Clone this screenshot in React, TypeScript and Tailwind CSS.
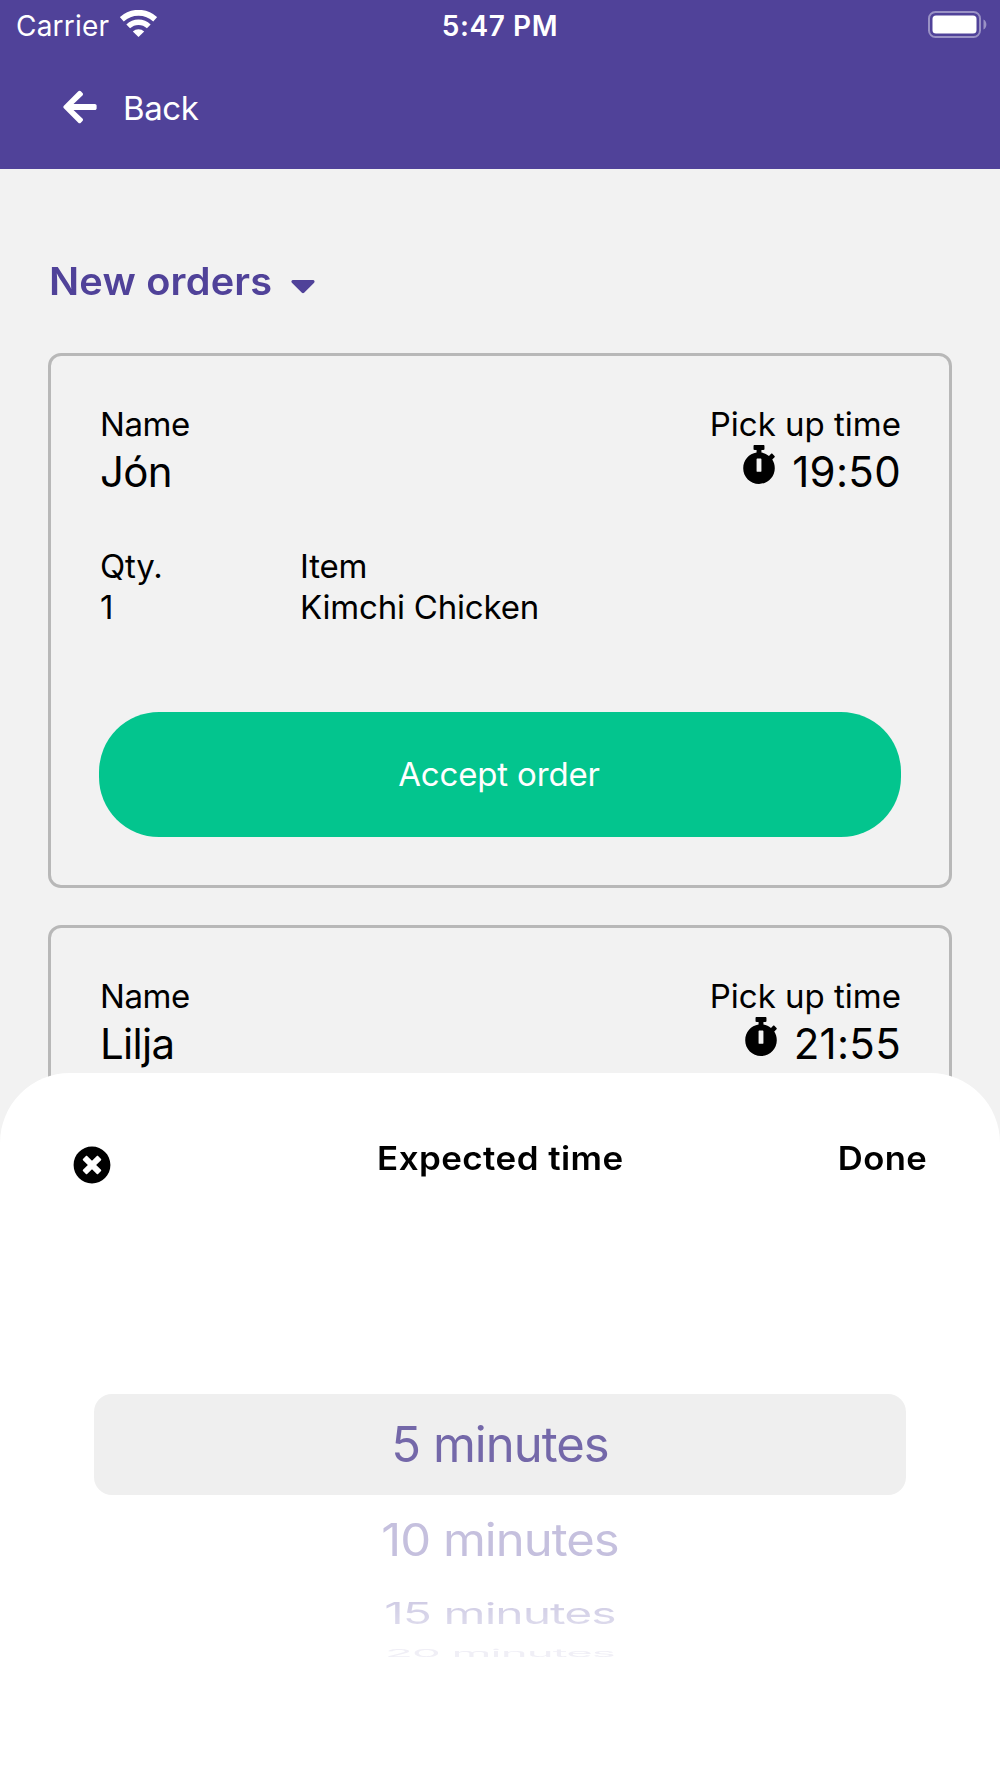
import React from 'react';
import { FaArrowLeft, FaCaretDown, FaStopwatch, FaTimesCircle } from 'react-icons/fa';

interface OrderItem {
    qty: number;
    name: string;
}

interface Order {
    name: string;
    pickUpTime: string;
    items: OrderItem[];
}

const orders: Order[] = [
    { name: 'Jón', pickUpTime: '19:50', items: [{ qty: 1, name: 'Kimchi Chicken' }] },
    { name: 'Lilja', pickUpTime: '21:55', items: [] },
];

const WifiIcon: React.FC<{className: string}> = ({ className }) => (
    <svg className={className} viewBox="0 0 37 27" fill="none" stroke="currentColor">
        <path d="M1.8 9.3A24.5 24.5 0 0 1 35.2 9.3" strokeWidth="5.8"></path>
        <path d="M8.2 16.4A15 15 0 0 1 28.8 16.4" strokeWidth="5.4"></path>
        <path d="M18.5 27L12.8 21.4A8.3 8.3 0 0 1 24.2 21.4Z" fill="currentColor" stroke="none"></path>
    </svg>
);

const BatteryIcon: React.FC<{className: string}> = ({ className }) => (
    <svg className={className} viewBox="0 0 59 27" fill="none">
        <rect x="1" y="1" width="51" height="25" rx="6.5" stroke="#9a92c5" strokeWidth="2"></rect>
        <rect x="4.5" y="4.5" width="44" height="18" rx="3.5" fill="white"></rect>
        <path d="M55.5 8.5C59.3 10 59.3 17 55.5 18.5Z" fill="#9a92c5"></path>
    </svg>
);

const StatusBar: React.FC = () => (
    <div className="grid grid-cols-3 h-[50px] px-4 text-[28px] leading-[52px]">
        <div className="flex items-start">
            <span className="w-[94px] whitespace-nowrap tracking-[0.2px]">Carrier</span>
            <WifiIcon className="ml-[10px] mt-[10px] w-[37px] h-[27px]"/>
        </div>
        <span className="text-center font-semibold tracking-[0.6px]">5:47 PM</span>
        <BatteryIcon className="justify-self-end -mr-[3px] mt-[10.5px] w-[59px] h-[27px]"/>
    </div>
);

const OrderCard: React.FC<{order: Order}> = ({ order }) => (
    <section className="p-12 border-3 border-[#b8b8b8] rounded-[13px] text-[33px] leading-[41px]">
        <div className="flex justify-between pl-px">
            <div>
                <p className="tracking-[-0.4px]">Name</p>
                <p className="text-[42px] leading-[54px] tracking-[-0.7px]">{order.name}</p>
            </div>
            <div className="flex flex-col items-end">
                <p>Pick up time</p>
                <div className="flex text-[42px] leading-[54px]">
                    <FaStopwatch className="w-[34px] h-[39px] mr-4"/>
                    <span className="tracking-[0.3px]">{order.pickUpTime}</span>
                </div>
            </div>
        </div>
        {order.items.length > 0 && (
            <div className="grid grid-cols-[200px_1fr] mt-[47px] pl-px tracking-[-0.2px]">
                <span>Qty.</span>
                <span>Item</span>
                {order.items.map((item) => (
                    <React.Fragment key={item.name}>
                        <span>{item.qty}</span>
                        <span>{item.name}</span>
                    </React.Fragment>
                ))}
            </div>
        )}
        <button type="button" className="block w-full h-[125px] mt-[84px] pr-0.5 rounded-[60px] bg-[#03c58e] text-white tracking-[-0.15px]">
            Accept order
        </button>
    </section>
);

// Options below the selected one roll away like a drum
const TimePicker: React.FC = () => (
    <div className="mx-[94px] text-center text-[49px] tracking-[-1px] text-[#504299]">
        <div className="h-[101px] leading-[102px] rounded-[18px] bg-[#efefef] text-[#7468a9]">5 minutes</div>
        <div className="h-[91px] leading-[91px] scale-y-[0.91] text-[#c5c0de]">10 minutes</div>
        <div className="h-[55px] leading-[55px] scale-x-[0.98] scale-y-[0.6]">
            <span className="bg-linear-to-b from-[#cdc9e3] to-[#e0deee] bg-clip-text text-transparent">15 minutes</span>
        </div>
        <div className="h-[25px] leading-[25px] scale-x-[0.93] scale-y-[0.22] text-[#f0eff6]">20 minutes</div>
    </div>
);

const App: React.FC = () => {
    return (
        <div className="relative h-[1778px] w-[1000px] overflow-hidden bg-[#f2f2f2] text-black font-['Inter',sans-serif]">
            <header className="h-[169px] bg-[#504299] text-white">
                <StatusBar/>
                <button type="button" className="flex items-center mt-[34px] ml-[61px] text-[33px] leading-[48px]">
                    <FaArrowLeft className="mb-0.5 w-[38px] h-[38px]"/>
                    <span className="ml-6 tracking-[-0.4px]">Back</span>
                </button>
            </header>
            <main className="px-12">
                <button type="button" className="flex items-center mt-[87px] ml-px h-[50px] text-[38px] leading-[50px] font-semibold text-[#504299]">
                    <span className="w-[224px] text-left whitespace-nowrap origin-left scale-x-[1.045] tracking-[0.2px]">New orders</span>
                    <FaCaretDown className="ml-[17px] mt-[7px] w-[26px] h-[40px]"/>
                </button>
                <div className="flex flex-col gap-[37px] mt-[47px]">
                    {orders.map((order) => (
                        <OrderCard key={order.name} order={order}/>
                    ))}
                </div>
            </main>
            <div className="absolute inset-x-0 bottom-0 h-[705px] rounded-t-[70px] bg-white">
                <div className="grid grid-cols-[1fr_auto_1fr] items-center h-[60px] mt-[56px] px-[73px] text-[33px] font-semibold">
                    <button type="button" aria-label="Close" className="mt-[11px]">
                        <FaTimesCircle className="w-[38px] h-[38px]"/>
                    </button>
                    <h2 className="scale-x-[1.06] tracking-[0.4px]">Expected time</h2>
                    <button type="button" className="justify-self-end origin-right scale-x-[1.05] tracking-[0.4px]">Done</button>
                </div>
                <div className="mt-[205px]">
                    <TimePicker/>
                </div>
            </div>
        </div>
    );
};

export default App;
